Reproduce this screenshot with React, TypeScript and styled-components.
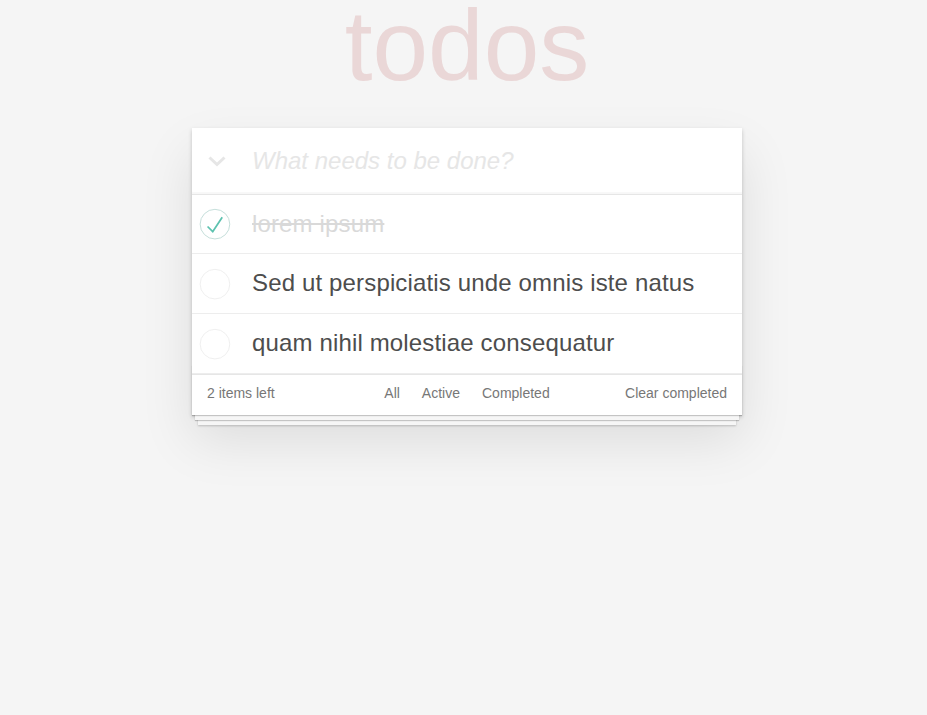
import React from 'react';
import styled, { createGlobalStyle } from 'styled-components';

const GlobalStyle = createGlobalStyle`
  html, body {
    margin: 0;
    padding: 0;
  }
  body {
    background: #f5f5f5;
    color: #4d4d4d;
    font-family: 'Liberation Sans', Arial, sans-serif;
    font-size: 14px;
    line-height: 1.4em;
    font-weight: 300;
  }
`;

const Page = styled.div`
  display: flex;
  justify-content: center;
  align-items: flex-start;
  min-height: 100vh;
  padding-left: 7px;
  box-sizing: border-box;
`;

const Column = styled.div`
  width: 550px;
  display: flex;
  flex-direction: column;
  padding-bottom: 40px;
`;

const Title = styled.h1`
  margin: -3px 0 34px;
  font-size: 100px;
  line-height: 97px;
  font-weight: 100;
  text-align: center;
  color: rgba(175, 47, 47, 0.15);
`;

const TodoApp = styled.section`
  background: #fff;
  box-shadow: 0 2px 4px 0 rgba(0, 0, 0, 0.2), 0 25px 50px 0 rgba(0, 0, 0, 0.1);
`;

const Header = styled.header`
  display: flex;
  align-items: center;
  box-shadow: inset 0 -2px 1px rgba(0, 0, 0, 0.03);
`;

const ToggleAll = styled.div`
  width: 60px;
  display: flex;
  justify-content: center;
  padding-right: 10px;
  padding-top: 2px;
  box-sizing: border-box;
`;

const NewTodo = styled.input`
  flex: 1;
  border: none;
  outline: none;
  background: transparent;
  padding: 16px 16px 16px 0;
  margin: 0;
  font-family: inherit;
  font-size: 24px;
  line-height: 1.4em;
  height: 65.6px;
  box-sizing: border-box;
  color: #4d4d4d;

  &::placeholder {
    font-style: italic;
    font-weight: 300;
    color: #e6e6e6;
  }
`;

const List = styled.ul`
  list-style: none;
  margin: 0;
  padding: 0;
  border-top: 1px solid #e6e6e6;
`;

const Item = styled.li`
  display: flex;
  align-items: center;
  border-bottom: 1px solid #ededed;
`;

const Toggle = styled.div`
  width: 40px;
  height: 40px;
  flex: none;
`;

const Label = styled.label<{ $done?: boolean }>`
  flex: 1;
  display: block;
  padding: 15px 15px 15px 20px;
  font-size: 24px;
  letter-spacing: 0.15px;
  line-height: 1.2;
  color: ${p => (p.$done ? '#d9d9d9' : '#4d4d4d')};
  text-decoration: ${p => (p.$done ? 'line-through' : 'none')};
`;

const Footer = styled.footer`
  position: relative;
  display: flex;
  justify-content: space-between;
  align-items: center;
  height: 20px;
  padding: 8px 15px 12px;
  color: #777;
  border-top: 1px solid #e6e6e6;

  &::before {
    content: '';
    position: absolute;
    right: 0;
    bottom: 0;
    left: 0;
    height: 50px;
    overflow: hidden;
    pointer-events: none;
    box-shadow: 0 1px 1px rgba(0, 0, 0, 0.2), 0 8px 0 -3px #f6f6f6,
      0 9px 1px -3px rgba(0, 0, 0, 0.2), 0 16px 0 -6px #f6f6f6,
      0 17px 2px -6px rgba(0, 0, 0, 0.2);
  }
`;

const Count = styled.span`
  position: relative;
  width: 120px;
  line-height: 20px;
`;

const Filters = styled.ul`
  position: relative;
  list-style: none;
  margin: 0;
  padding: 0;
  line-height: 20px;
  text-align: center;

  li {
    display: inline;
  }
`;

const FilterLink = styled.a<{ $selected?: boolean }>`
  margin: 3px;
  padding: 3px 7px;
  border: 1px solid ${p => (p.$selected ? 'rgba(175, 47, 47, 0.2)' : 'transparent')};
  border-radius: 3px;
  color: inherit;
  text-decoration: none;
`;

const ClearButton = styled.button`
  position: relative;
  width: 120px;
  text-align: right;
  border: none;
  background: none;
  padding: 1px 0 0;
  margin: 0;
  font: inherit;
  line-height: 20px;
  color: inherit;
  cursor: pointer;
`;

function Circle({ done }: { done?: boolean }) {
  return (
    <svg width="40" height="40" viewBox="-10 -18 100 135">
      <circle cx="50" cy="50" r="50" fill="none" stroke={done ? '#bddad5' : '#ededed'} strokeWidth="3" />
      {done && <path fill="#5dc2af" d="M72 25L42 71 27 56l-4 4 20 20 34-52z" />}
    </svg>
  );
}

const todos = [
  { text: 'lorem ipsum', done: true },
  { text: 'Sed ut perspiciatis unde omnis iste natus', done: false },
  { text: 'quam nihil molestiae consequatur', done: false },
];

function App() {
  return (
    <Page>
      <GlobalStyle />
      <Column>
        <Title>todos</Title>
        <TodoApp>
          <Header>
            <ToggleAll>
              <svg width="18" height="11" viewBox="0 0 18 11">
                <polyline points="1.5,1.5 9,8.5 16.5,1.5" fill="none" stroke="#e6e6e6" strokeWidth="3" />
              </svg>
            </ToggleAll>
            <NewTodo placeholder="What needs to be done?" />
          </Header>
          <List>
            {todos.map(t => (
              <Item key={t.text}>
                <Toggle>
                  <Circle done={t.done} />
                </Toggle>
                <Label $done={t.done}>{t.text}</Label>
              </Item>
            ))}
          </List>
          <Footer>
            <Count>2 items left</Count>
            <Filters>
              <li><FilterLink href="#/">All</FilterLink></li>
              <li><FilterLink href="#/active">Active</FilterLink></li>
              <li><FilterLink href="#/completed">Completed</FilterLink></li>
            </Filters>
            <ClearButton>Clear completed</ClearButton>
          </Footer>
        </TodoApp>
      </Column>
    </Page>
  );
}

export default App;
